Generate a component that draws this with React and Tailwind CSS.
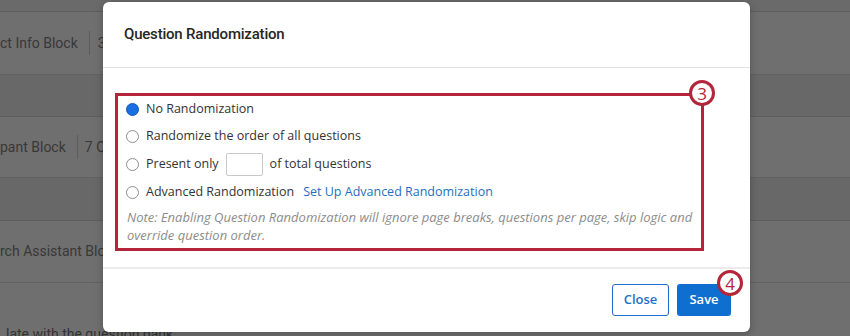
import React from 'react';

function Radio({ checked }) {
  if (checked) {
    return (
      <span className="w-[13px] h-[13px] rounded-full bg-[#1b6fe4] border border-[#1457b8] shrink-0" />
    );
  }
  return (
    <span className="w-[13px] h-[13px] rounded-full bg-white border border-[#8d8d8d] shrink-0" />
  );
}

function Marker({ n, className }) {
  return (
    <div
      className={
        'absolute w-[26px] h-[26px] rounded-full bg-white border-[3px] border-[#b4243a] flex items-center justify-center text-[17px] leading-none font-medium text-[#b4243a] font-["Open_Sans",sans-serif] ' +
        className
      }
    >
      {n}
    </div>
  );
}

export default function App() {
  return (
    <div className="relative w-[850px] h-[336px] overflow-hidden bg-[#6e6e6e] font-['Open_Sans',sans-serif]">
      {/* BACKGROUND PAGE */}
      <div className="flex flex-col text-[14px] text-[#383838] font-['Roboto',sans-serif]">
        <div className="h-[12px] bg-[#6a6a6a] border-b border-[#5e5e5e]" />
        <div className="h-[63px] bg-[#6f6f6f] border-b border-[#626262] flex items-center">
          <span>ct Info Block</span>
          <span className="ml-[11px] w-px h-[24px] bg-[#5c5c5c]" />
          <span className="ml-[8px]">3</span>
        </div>
        <div className="h-[42px] bg-[#686868] border-b border-[#5e5e5e]" />
        <div className="h-[61px] bg-[#6f6f6f] border-b border-[#626262] flex items-center">
          <span>pant Block</span>
          <span className="ml-[11px] w-px h-[24px] bg-[#5c5c5c]" />
          <span className="ml-[7px]">7 Q</span>
        </div>
        <div className="h-[43px] bg-[#686868] border-b border-[#5e5e5e]" />
        <div className="h-[62px] bg-[#6f6f6f] border-b border-[#626262] flex items-center">
          <span>rch Assistant Block</span>
        </div>
        <div className="h-[53px] bg-[#6f6f6f] flex items-end">
          <span className="-mb-[9px] ml-[6px] text-[#333]">late with the question bank</span>
        </div>
      </div>

      {/* MODAL */}
      <div className="absolute inset-0">
        <div className="ml-[103px] mt-[2px] w-[647px] h-[330px] bg-white rounded-[6px] shadow-[0_2px_8px_rgba(0,0,0,0.25)] flex flex-col">
          {/* HEADER */}
          <div className="h-[66px] border-b border-[#e3e3e3] flex items-center px-[21px] pb-[1px]">
            <h2 className="text-[15px] font-medium text-[#262626] font-['Roboto',sans-serif] tracking-[-0.2px]">
              Question Randomization
            </h2>
          </div>

          {/* BODY */}
          <div className="flex-1 pl-[12px] pt-[25px]">
            <div className="relative w-[589px] h-[158px] border-[3px] border-[#b4243a] pl-[8px] text-[12.5px] text-[#333]">
              <div className="flex flex-col">
                <label className="h-[26px] flex items-center gap-[7px]">
                  <Radio checked />
                  <span>No Randomization</span>
                </label>
                <label className="h-[28px] flex items-center gap-[7px]">
                  <Radio />
                  <span>Randomize the order of all questions</span>
                </label>
                <label className="h-[28px] flex items-center gap-[7px]">
                  <Radio />
                  <span>Present only</span>
                  <span className="w-[37px] h-[23px] border border-[#c9c9c9] rounded-[2px] bg-white" />
                  <span>of total questions</span>
                </label>
                <label className="h-[28px] flex items-center gap-[7px]">
                  <Radio />
                  <span>Advanced Randomization</span>
                  <span className="ml-[2px] text-[#1f6fbf]">Set Up Advanced Randomization</span>
                </label>
                <p className="mt-[2px] pl-[1px] pr-[4px] italic text-[13px] leading-[18px] text-[#8c8c8c]">
                  Note: Enabling Question Randomization will ignore page breaks, questions per page, skip logic and override question order.
                </p>
              </div>
              <Marker n="3" className="-top-[16px] -right-[14px]" />
            </div>
          </div>

          {/* FOOTER */}
          <div className="h-[65px] border-t-2 border-[#ececec] flex items-center justify-end gap-[8px] pr-[19px] pb-[1px]">
            <button className="w-[57px] h-[32px] rounded-[3px] border border-[#1e6fcc] text-[#1e6fcc] text-[13px] font-semibold">
              Close
            </button>
            <div className="relative">
              <button className="w-[54px] h-[32px] rounded-[3px] bg-[#0f6fd1] text-white text-[13px] font-semibold">
                Save
              </button>
              <Marker n="4" className="-top-[14px] -right-[12px]" />
            </div>
          </div>
        </div>
      </div>
    </div>
  );
}
